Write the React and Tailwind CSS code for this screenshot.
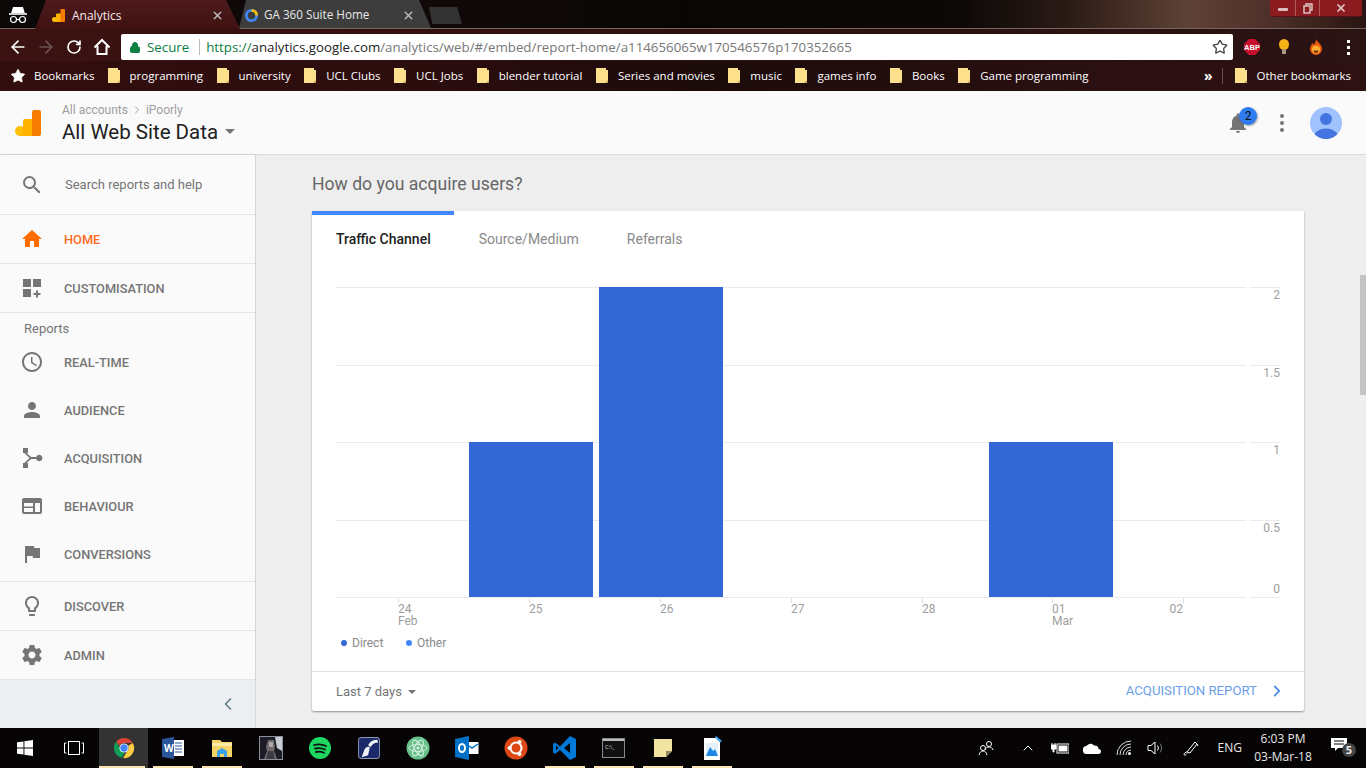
import { ChevronLeft, ChevronRight, ArrowLeft, ArrowRight, RotateCw, Star, Lock, X, ChevronUp } from "lucide-react";

const bookmarks = ["programming", "university", "UCL Clubs", "UCL Jobs", "blender tutorial", "Series and movies", "music", "games info", "Books", "Game programming"];

const paths = {
  search: "M15.5 14h-.79l-.28-.27A6.471 6.471 0 0 0 16 9.5 6.5 6.5 0 1 0 9.5 16c1.61 0 3.09-.59 4.23-1.57l.27.28v.79l5 4.99L20.49 19l-4.99-5zm-6 0C7.01 14 5 11.99 5 9.5S7.01 5 9.5 5 14 7.01 14 9.5 11.99 14 9.5 14z",
  home: "M10 20v-6h4v6h5v-8h3L12 3 2 12h3v8z",
  custom: "M3 3h8v8H3zM13 3h8v8h-8zM3 13h8v8H3zM16 14.500h2v2.500h2.500v2H18v2.500h-2V19h-2.500v-2H16z",
  clock: "M11.99 2C6.47 2 2 6.48 2 12s4.47 10 9.99 10C17.52 22 22 17.52 22 12S17.52 2 11.99 2zM12 20c-4.42 0-8-3.58-8-8s3.58-8 8-8 8 3.58 8 8-3.58 8-8 8zm.5-13H11v6l5.25 3.15.75-1.23-4.5-2.67z",
  person: "M12 12c2.21 0 4-1.79 4-4s-1.79-4-4-4-4 1.79-4 4 1.79 4 4 4zm0 2c-2.67 0-8 1.34-8 4v2h16v-2c0-2.66-5.33-4-8-4z",
  acq: "M3 2h5v5H6.6l4.6 4h5a3.2 3.2 0 1 1 0 2h-5l-4.6 4H8v5H3v-5h1.2l5.4-5-5.4-5H3z",
  behaviour: "M4 4h16a2 2 0 0 1 2 2v12a2 2 0 0 1-2 2H4a2 2 0 0 1-2-2V6a2 2 0 0 1 2-2zm0 5v9h9v-4H4v-1.5h9V9zm11 0v9h5V9z",
  flag: "M14.4 6L14 4H5v17h2v-7h5.6l.4 2h7V6z",
  bulb: "M9 21c0 .55.45 1 1 1h4c.55 0 1-.45 1-1v-1H9v1zm3-19C8.14 2 5 5.14 5 9c0 2.38 1.19 4.47 3 5.74V17c0 .55.45 1 1 1h6c.55 0 1-.45 1-1v-2.26c1.81-1.27 3-3.36 3-5.74 0-3.86-3.14-7-7-7zm2.85 11.1l-.85.6V16h-4v-2.3l-.85-.6C7.8 12.16 7 10.63 7 9c0-2.76 2.24-5 5-5s5 2.24 5 5c0 1.63-.8 3.16-2.15 4.1z",
  gear: "M19.43 12.98c.04-.32.07-.64.07-.98s-.03-.66-.07-.98l2.11-1.65c.19-.15.24-.42.12-.64l-2-3.46c-.12-.22-.39-.3-.61-.22l-2.49 1c-.52-.4-1.08-.73-1.69-.98l-.38-2.65C14.46 2.18 14.25 2 14 2h-4c-.25 0-.46.18-.49.42l-.38 2.65c-.61.25-1.17.59-1.69.98l-2.49-1c-.23-.09-.49 0-.61.22l-2 3.46c-.13.22-.07.49.12.64l2.11 1.65c-.04.32-.07.65-.07.98s.03.66.07.98l-2.11 1.65c-.19.15-.24.42-.12.64l2 3.46c.12.22.39.3.61.22l2.49-1c.52.4 1.08.73 1.69.98l.38 2.65c.03.24.24.42.49.42h4c.25 0 .46-.18.49-.42l.38-2.65c.61-.25 1.17-.59 1.69-.98l2.49 1c.23.09.49 0 .61-.22l2-3.46c.12-.22.07-.49-.12-.64l-2.11-1.65zM12 15.5c-1.93 0-3.5-1.57-3.5-3.5s1.57-3.5 3.5-3.5 3.5 1.57 3.5 3.5-1.57 3.5-3.5 3.5z",
  bell: "M12 22c1.1 0 2-.9 2-2h-4c0 1.1.89 2 2 2zm6-6v-5c0-3.07-1.64-5.64-4.5-6.32V4c0-.83-.67-1.5-1.5-1.5s-1.5.67-1.5 1.5v.68C7.63 5.36 6 7.92 6 11v5l-2 2v1h16v-1l-2-2z",
};

function Mi({ d, className }) {
  return (
    <svg viewBox="0 0 24 24" className={className} fill="currentColor">
      <path d={d} />
    </svg>
  );
}

function GaLogo({ className }) {
  return (
    <svg viewBox="0 0 26 26" className={className}>
      <rect x="0" y="16" width="10" height="10" rx="5" fill="#ffc107" />
      <path d="M8 11a2 2 0 0 1 2-2h8v17H3a3 3 0 0 1-1-.2c3 .2 6-1 6-4z" fill="#ffb300" />
      <path d="M17 2a2 2 0 0 1 2-2h5a2 2 0 0 1 2 2v22a2 2 0 0 1-2 2h-7z" fill="#f57c00" />
    </svg>
  );
}

function Folder() {
  return (
    <svg viewBox="0 0 12 15" className="w-3 h-[15px] shrink-0">
      <path d="M0 0h10v2h2v13H0z" fill="#fce08b" />
      <path d="M9 15l3-3v3z" fill="#c9a94f" />
    </svg>
  );
}

function ChromeLogo() {
  return (
    <svg viewBox="0 0 24 24" className="w-[22px] h-[22px]">
      <path d="M12 1a11 11 0 0 1 9.500 5.500H12A5.500 5.500 0 0 0 7 9.700L3.500 5A11 11 0 0 1 12 1z" fill="#db4437" />
      <path d="M3.500 5L8 12.800a5 5 0 0 0 4.800 4.600L9.500 22.700A11 11 0 0 1 3.500 5z" fill="#0f9d58" />
      <path d="M21.500 6.500A11 11 0 0 1 11 23l4.500-7.500a5 5 0 0 0 1-6z" fill="#ffcd40" />
      <circle cx="12" cy="12" r="5" fill="#fff" />
      <circle cx="12" cy="12" r="4" fill="#4285f4" />
    </svg>
  );
}

function BrowserChrome() {
  return (
    <div className="h-[91px] shrink-0 flex flex-col [font-family:'Open_Sans',sans-serif]">
      {/* Tab strip */}
      <div className="h-[29px] flex items-stretch bg-[linear-gradient(90deg,#0b0808_0%,#120909_30%,#0a0606_50%,#0c0807_70%,#2a1a15_78%,#5e4236_87%,#4d3029_93%,#2a1512_100%)] border-b border-[#75655f]">
        <div className="w-[35px] flex items-center justify-center text-white pt-[2px]">
          <svg viewBox="0 0 20 18" className="w-[20px] h-[18px]" fill="none" stroke="currentColor" strokeWidth="1.200">
            <path d="M5.500 1.500h9l1.500 5H4z" fill="currentColor" />
            <path d="M1 8h18" strokeWidth="1.600" />
            <circle cx="5.500" cy="13.500" r="3" />
            <circle cx="14.500" cy="13.500" r="3" />
            <path d="M8.500 13.500h3" />
          </svg>
        </div>
        <div className="w-[205px] h-[29px] -mb-px bg-[linear-gradient(180deg,#4e1a1a,#3f1212)] [clip-path:polygon(0_100%,11px_0,191px_0,100%_100%)] flex items-center pt-[2px] pl-[17px] pr-[16px]">
          <GaLogo className="w-[13px] h-[13px] shrink-0 mr-[7px]" />
          <span className="text-[12px] text-[#f5e9e9] flex-1">Analytics</span>
          <X className="w-[13px] h-[13px] text-[#bbb]" strokeWidth={2.5} />
        </div>
        <div className="w-[192px] h-[28px] bg-[#3d3d3d] [clip-path:polygon(0_100%,7px_0,180px_0,100%_100%)] flex items-center pt-[2px] pl-[4px] pr-[16px] -ml-px">
          <svg viewBox="0 0 16 16" className="w-[15px] h-[15px] shrink-0 ml-[1px] mr-[5px]" fill="none" strokeWidth="3">
            <circle cx="8" cy="8" r="5.500" stroke="#4285f4" />
            <path d="M8 2.500a5.500 5.500 0 0 1 5.500 5.500" stroke="#fbbc05" />
          </svg>
          <span className="text-[11.7px] text-[#e8e8e8] flex-1">GA 360 Suite Home</span>
          <X className="w-[13px] h-[13px] text-[#bbb]" strokeWidth={2.5} />
        </div>
        <div className="w-[33px] h-[17px] mt-[7px] -ml-[2px] bg-[#333] [clip-path:polygon(0_0,85%_0,100%_100%,10%_100%)]" />
        <div className="flex-1 flex justify-end pr-[4px]">
          <div className="w-[92px] h-[17px] bg-[#8a1b1e] rounded-b-[2px] flex text-[#e3c9c9] border-b border-[#5a1014]">
            <div className="w-[26px] flex items-center justify-center border-r border-[#b05a5a] pt-[3px]"><span className="w-[10px] h-[3px] bg-[#dcbcbc] rounded-[1px]" /></div>
            <div className="w-[24px] flex items-center justify-center border-r border-[#b05a5a]">
              <svg viewBox="0 0 10 11" className="w-[10px] h-[11px]" fill="none" stroke="currentColor" strokeWidth="1.400"><path d="M3 2.500V1h6v6H7.500" /><rect x="1" y="3" width="6" height="7" /></svg>
            </div>
            <div className="flex-1 flex items-center justify-center"><X className="w-3 h-3" strokeWidth={3.5} /></div>
          </div>
        </div>
      </div>

      {/* Toolbar */}
      <div className="h-[32px] flex items-start pt-[5px] bg-[linear-gradient(90deg,#3c1212,#2e0f0f_50%,#2a1313)]">
        <div className="w-[121px] h-[26px] flex items-center text-white pl-[8px]">
          <ArrowLeft className="w-[20px] h-[20px]" strokeWidth={2} />
          <ArrowRight className="w-[20px] h-[20px] ml-[8px] text-[#6e5252]" strokeWidth={2} />
          <RotateCw className="w-[16px] h-[16px] ml-[10px]" strokeWidth={2.5} />
          <svg viewBox="0 0 18 18" className="w-[18px] h-[18px] ml-[11px]" fill="none" stroke="currentColor" strokeWidth="2"><path d="M1.500 9.500L9 2l7.500 7.500M4.500 8v8h9V8" /></svg>
        </div>
        <div className="w-[1112px] h-[26px] bg-white rounded-[2px] flex items-center pl-[8px] pr-[5px] text-[13.3px] whitespace-nowrap">
          <Lock className="w-[12px] h-[13px] text-[#0b8043] mr-[6px]" fill="#0b8043" />
          <span className="text-[#0b8043] mr-[10px] pt-px">Secure</span>
          <span className="w-px h-[16px] bg-[#bbb] mr-[6px]" />
          <span className="flex-1 pt-px">
            <span className="text-[#0b8043]">https://</span>
            <span className="text-[#222]">analytics.google.com</span>
            <span className="text-[#777]">/analytics/web/#/embed/report-home/a114656065w170546576p170352665</span>
          </span>
          <Star className="w-[16px] h-[16px] text-[#444]" strokeWidth={2} />
        </div>
        <div className="flex-1 h-[26px] flex items-center pl-[11px]">
          <svg viewBox="0 0 16 16" className="w-[16px] h-[16px]">
            <polygon points="5,0 11,0 16,5 16,11 11,16 5,16 0,11 0,5" fill="#c8102e" />
            <text x="8" y="11" textAnchor="middle" fontSize="7.500" fontWeight="700" fill="#fff" fontFamily="Liberation Sans, sans-serif">ABP</text>
          </svg>
          <svg viewBox="0 0 12 16" className="w-[12px] h-[16px] ml-[18px]"><ellipse cx="6" cy="5.500" rx="5" ry="5.500" fill="#f5b316" /><rect x="4" y="10" width="4" height="5" fill="#a89a80" /></svg>
          <svg viewBox="0 0 14 16" className="w-[14px] h-[16px] ml-[19px]"><path d="M7 0c1 3 6 5 6 10a6 6 0 0 1-12 0c0-3 2-4 2-6 1 1 2 1 2 2 1-2 2-4 2-6z" fill="#e8590c" /><circle cx="7" cy="10.500" r="4" fill="#fbb034" /><path d="M4.500 11.500a2.500 2.500 0 0 0 5 0z" fill="#7a2d05" /></svg>
          <div className="ml-[24px] flex flex-col gap-[3px]">
            <span className="w-[3px] h-[3px] bg-white" /><span className="w-[3px] h-[3px] bg-white" /><span className="w-[3px] h-[3px] bg-white" />
          </div>
        </div>
      </div>

      {/* Bookmarks bar */}
      <div className="flex-1 flex items-center pb-px pl-[10px] pr-[15px] bg-[linear-gradient(90deg,#330e0e,#2c0d0e_30%,#1c0b0b_52%,#2a1010_80%,#2c1212)] text-[11.5px] text-white whitespace-nowrap">
        <Star className="w-4 h-4 mr-[8px]" fill="#fff" strokeWidth={1} />
        <span className="mr-[13px]">Bookmarks</span>
        <div className="flex items-center gap-[13.5px]">
          {bookmarks.map((b) => (
            <div key={b} className="flex items-center gap-[10px]">
              <Folder />
              <span>{b}</span>
            </div>
          ))}
        </div>
        <div className="flex-1 flex justify-end items-center">
          <span className="font-bold text-[14px] leading-[14px] mr-[9px]">»</span>
          <span className="w-px h-[16px] bg-[#6b4a4a] mr-[12px]" />
          <Folder />
          <span className="ml-[10px]">Other bookmarks</span>
        </div>
      </div>
    </div>
  );
}

function AppHeader() {
  return (
    <div className="h-[64px] shrink-0 bg-[#fafafa] border-b border-[#dcdcdc] flex items-center pl-[15px] pr-[24px] [font-family:Roboto,sans-serif]">
      <GaLogo className="w-[26px] h-[26px] mr-[21px]" />
      <div className="flex-1 pt-[2px]">
        <div className="flex items-center text-[12px] leading-[14px] text-[#9e9e9e]">
          <span>All accounts</span>
          <ChevronRight className="w-3 h-3 mx-[3px]" />
          <span>iPoorly</span>
        </div>
        <div className="flex items-center mt-[2px] text-[20.5px] leading-[26px] text-[#212121]">
          All Web Site Data
          <span className="ml-[7px] w-0 h-0 border-x-[5px] border-x-transparent border-t-[5px] border-t-[#757575]" />
        </div>
      </div>
      <div className="relative mr-[30px]">
        <Mi d={paths.bell} className="w-[24px] h-[24px] text-[#757575]" />
        <span className="absolute -top-[4px] left-[13px] w-[18px] h-[18px] rounded-full bg-[#2f7bf0] text-[#111] text-[12px] flex items-center justify-center shadow-[1px_1px_2px_rgba(0,0,0,0.35)]">2</span>
      </div>
      <div className="flex flex-col gap-[3px] mr-[26px]">
        <span className="w-[4px] h-[4px] rounded-full bg-[#757575]" /><span className="w-[4px] h-[4px] rounded-full bg-[#757575]" /><span className="w-[4px] h-[4px] rounded-full bg-[#757575]" />
      </div>
      <svg viewBox="0 0 32 32" className="w-[32px] h-[32px]">
        <clipPath id="av"><circle cx="16" cy="16" r="16" /></clipPath>
        <g clipPath="url(#av)">
          <rect width="32" height="32" fill="#a0c3ff" />
          <circle cx="16" cy="12" r="6" fill="#4374e0" />
          <ellipse cx="16" cy="30" rx="12" ry="8.500" fill="#4374e0" />
        </g>
      </svg>
    </div>
  );
}

function NavRow({ icon, label, active, className = "" }) {
  return (
    <div className={`flex items-center pl-[20px] ${className}`}>
      <Mi d={icon} className={`w-[24px] h-[24px] mr-[20px] ${active ? "text-[#ff6d00]" : "text-[#757575]"}`} />
      <span className={`text-[12.8px] font-medium pt-[2px] ${active ? "text-[#ff6d1f]" : "text-[#757575]"}`}>{label}</span>
    </div>
  );
}

function Sidebar() {
  return (
    <div className="w-[256px] shrink-0 bg-[#fafafa] border-r border-[#d6d6d6] shadow-[1px_0_2px_rgba(0,0,0,0.15)] flex flex-col [font-family:Roboto,sans-serif]">
      <div className="h-[60px] flex items-center pl-[20px] border-b border-[#e4e4e4]">
        <Mi d={paths.search} className="w-[24px] h-[24px] mr-[21px] text-[#757575]" />
        <span className="text-[13px] text-[#757575]">Search reports and help</span>
      </div>
      <NavRow icon={paths.home} label="HOME" active className="h-[49px] border-b border-[#e4e4e4]" />
      <NavRow icon={paths.custom} label="CUSTOMISATION" className="h-[49px] border-b border-[#e4e4e4]" />
      <div className="h-[25px] pl-[24px] pt-[7px] flex items-center text-[13px] text-[#757575]">Reports</div>
      <NavRow icon={paths.clock} label="REAL-TIME" className="h-[48px]" />
      <NavRow icon={paths.person} label="AUDIENCE" className="h-[48px]" />
      <NavRow icon={paths.acq} label="ACQUISITION" className="h-[48px]" />
      <NavRow icon={paths.behaviour} label="BEHAVIOUR" className="h-[48px]" />
      <NavRow icon={paths.flag} label="CONVERSIONS" className="h-[52px] pb-[4px] border-b border-[#e4e4e4]" />
      <NavRow icon={paths.bulb} label="DISCOVER" className="h-[49px] border-b border-[#e4e4e4]" />
      <NavRow icon={paths.gear} label="ADMIN" className="h-[49px] border-b border-[#e4e4e4]" />
      <div className="flex-1 bg-[#eceff1] flex items-center justify-end pr-[17px]">
        <ChevronLeft className="w-[20px] h-[20px] text-[#607d8b]" />
      </div>
    </div>
  );
}

const xTicks = [
  { x: 398, label: "24", sub: "Feb" },
  { x: 529, label: "25" },
  { x: 660, label: "26" },
  { x: 791, label: "27" },
  { x: 922, label: "28" },
  { x: 1052, label: "01", sub: "Mar" },
  { x: 1183, label: "02", end: true },
];
const yTicks = [
  { y: 287, label: "2", ty: 299 },
  { y: 365, label: "1.5", ty: 377 },
  { y: 442, label: "1", ty: 454 },
  { y: 520, label: "0.5", ty: 532 },
  { y: 597, label: "0", ty: 593 },
];
const bars = [
  { x: 469, y: 442 },
  { x: 599, y: 287 },
  { x: 989, y: 442 },
];

function Chart() {
  // svg origin is at page (312, 263)
  return (
    <svg viewBox="312 263 992 408" className="w-[992px] h-[408px] block [font-family:Roboto,sans-serif]">
      {yTicks.map((t) => (
        <g key={t.label}>
          <rect x="336" y={t.y} width="910" height="1" fill="#ebebeb" />
          <rect x="1250" y={t.y} width="30" height="1" fill="#ebebeb" />
          <text x="1280" y={t.ty} textAnchor="end" fontSize="12" fill="#9e9e9e">{t.label}</text>
        </g>
      ))}
      {bars.map((b) => (
        <rect key={b.x} x={b.x} y={b.y} width="124" height={597 - b.y} fill="#3367d6" />
      ))}
      {xTicks.map((t) => (
        <g key={t.x}>
          <rect x={t.x} y="598" width="1" height="5" fill="#e0e0e0" />
          <text x={t.x} y="613" textAnchor={t.end ? "end" : "start"} fontSize="12" fill="#9e9e9e">{t.label}</text>
          {t.sub && <text x={t.x} y="625" fontSize="12" fill="#9e9e9e">{t.sub}</text>}
        </g>
      ))}
      <circle cx="344" cy="643" r="3" fill="#3367d6" />
      <text x="352" y="647" fontSize="12" fill="#8a8a8a">Direct</text>
      <circle cx="409" cy="643" r="3" fill="#4285f4" />
      <text x="417" y="647" fontSize="12" fill="#8a8a8a">Other</text>
    </svg>
  );
}

function Card() {
  return (
    <div className="w-[992px] bg-white rounded-b-[2px] shadow-[0_1px_2px_rgba(0,0,0,0.4)]">
      <div className="w-[142px] h-[4px] bg-[#4285f4]" />
      <div className="h-[48px] flex items-center pl-[24px] text-[14px] text-[#8a8a8a]">
        <span className="font-medium text-[#212121] mr-[48px]">Traffic Channel</span>
        <span className="mr-[48px]">Source/Medium</span>
        <span>Referrals</span>
      </div>
      <Chart />
      <div className="h-[40px] border-t border-[#e0e0e0] flex items-center pl-[24px] pr-[18px] text-[13px]">
        <span className="text-[#757575]">Last 7 days</span>
        <span className="ml-[6px] mt-[1px] w-0 h-0 border-x-[4px] border-x-transparent border-t-[4px] border-t-[#757575]" />
        <span className="ml-auto text-[13.2px] pb-[2px] text-[#6a9fe8]">ACQUISITION REPORT</span>
        <ChevronRight className="w-[18px] h-[18px] ml-[11px] mb-[2px] text-[#5a96e6]" strokeWidth={2.5} />
      </div>
    </div>
  );
}

function Content() {
  return (
    <div className="flex-1 bg-[#eeeeee] pl-[56px] [font-family:Roboto,sans-serif] overflow-hidden">
      <div className="h-[56px] flex items-center pt-[2px] text-[17.6px] text-[#666]">How do you acquire users?</div>
      <Card />
    </div>
  );
}

function Scrollbar() {
  return (
    <div className="w-[8px] shrink-0 bg-[#eeeeee] pt-[120px]">
      <div className="h-[120px] bg-[#c4c4c4] ml-[2px]" />
    </div>
  );
}

function Slot({ children, active, running }) {
  return (
    <div className={`w-[49px] h-full flex items-center justify-center relative ${active ? "bg-[#333]" : ""}`}>
      {children}
      {running && <span className={`absolute bottom-0 h-[2px] bg-[#fbe3b3] ${active ? "left-0 right-[3px]" : "left-[5px] right-[4px]"}`} />}
    </div>
  );
}

function Taskbar() {
  return (
    <div className="h-[40px] shrink-0 bg-[#060404] flex items-stretch text-white [font-family:'Open_Sans',sans-serif]">
      <div className="w-[49px] flex items-center justify-center">
        <svg viewBox="0 0 16 16" className="w-[16px] h-[16px]" fill="#fff"><path d="M0 2.300L6.500 1.400V7.600H0zM7.400 1.300L16 0V7.600H7.400zM0 8.400H6.500V14.600L0 13.700zM7.400 8.400H16V16L7.400 14.700z" /></svg>
      </div>
      <div className="w-[50px] flex items-center justify-center">
        <svg viewBox="0 0 20 14" className="w-[20px] h-[14px]" fill="none" stroke="#fff" strokeWidth="1"><rect x="4.500" y="0.500" width="11" height="13" /><path d="M2.500 2H0.500v10h2M17.500 2h2v10h-2" /></svg>
      </div>
      <Slot active running><ChromeLogo /></Slot>
      <Slot running>
        <svg viewBox="0 0 24 24" className="w-[24px] h-[24px]"><rect x="8" y="4" width="15" height="16" fill="#fff" /><path d="M14 7h7M14 10h7M14 13h7M14 16h7" stroke="#2b579a" /><path d="M1 3l12-2v22L1 21z" fill="#2b579a" /><text x="3" y="16" fontSize="10" fontWeight="700" fill="#fff">W</text></svg>
      </Slot>
      <Slot running>
        <svg viewBox="0 0 22 22" className="w-[22px] h-[22px]"><path d="M1 3h8l2 2h10v15H1z" fill="#f6d365" /><rect x="1" y="6" width="20" height="3" fill="#fbe9a8" /><path d="M6 20v-6l5-3 5 3v6h-3v-3H9v3z" fill="#3aa0e8" /></svg>
      </Slot>
      <Slot>
        <svg viewBox="0 0 24 24" className="w-[24px] h-[24px]"><rect width="24" height="24" fill="#8a8f9c" /><rect x="1" y="1" width="22" height="22" fill="#1c1c24" /><path d="M16 1h7v14l-5-3z" fill="#c9ccd2" /><path d="M9 4h6l1 7-1 4 3 8H5l3-8-1-4z" fill="#6f6a6e" /><path d="M10 6h4v5h-4z" fill="#b0a8a4" /><path d="M9 15h5l2 8H7z" fill="#3e3a44" /></svg>
      </Slot>
      <Slot>
        <svg viewBox="0 0 24 24" className="w-[24px] h-[24px]"><circle cx="12" cy="12" r="11" fill="#1ed760" /><path d="M6 9c4-1 8-1 12 1M7 12.500c3.500-.8 7-.5 10 1M8 16c3-.6 5.500-.3 8 .8" stroke="#111" strokeWidth="1.800" fill="none" strokeLinecap="round" /></svg>
      </Slot>
      <Slot>
        <svg viewBox="0 0 24 24" className="w-[22px] h-[24px]"><rect width="24" height="24" rx="4" fill="#8f96b0" /><rect x="1" y="1" width="22" height="22" rx="3" fill="#1a2a6a" /><path d="M4 22l3-8c1-3 4-4 6-3l-2 9z" fill="#f2f3f8" /><path d="M11 9c2-4 6-6 10-6l1 3c-4 0-7 2-8 5z" fill="#f2f3f8" /></svg>
      </Slot>
      <Slot>
        <svg viewBox="0 0 24 24" className="w-[24px] h-[24px]"><circle cx="12" cy="12" r="11.500" fill="#66c08a" /><g fill="none" stroke="#d8f0e0" strokeWidth="1"><ellipse cx="12" cy="12" rx="9" ry="3.500" /><ellipse cx="12" cy="12" rx="9" ry="3.500" transform="rotate(60 12 12)" /><ellipse cx="12" cy="12" rx="9" ry="3.500" transform="rotate(120 12 12)" /></g><circle cx="12" cy="12" r="1.600" fill="#d8f0e0" /></svg>
      </Slot>
      <Slot>
        <svg viewBox="0 0 24 24" className="w-[24px] h-[24px]"><rect x="10" y="6" width="13.500" height="12" fill="#fff" /><path d="M11 8l6 4 6-4" stroke="#0072c6" strokeWidth="1.500" fill="none" /><path d="M0 3l14-3v24L0 21z" fill="#0072c6" /><ellipse cx="7" cy="12" rx="3" ry="4" fill="none" stroke="#fff" strokeWidth="2" /></svg>
      </Slot>
      <Slot>
        <svg viewBox="0 0 24 24" className="w-[24px] h-[24px]"><circle cx="12" cy="12" r="11.500" fill="#dd4814" /><circle cx="12" cy="12" r="5.500" fill="none" stroke="#fff" strokeWidth="2" /><circle cx="5.500" cy="12" r="2" fill="#fff" /><circle cx="15.500" cy="6" r="2" fill="#fff" /><circle cx="15.500" cy="18" r="2" fill="#fff" /></svg>
      </Slot>
      <Slot running>
        <svg viewBox="0 0 24 24" className="w-[24px] h-[24px]"><path d="M17 0l6 3v18l-6 3L7 14 2 18l-2-1.500V8l2-1.500 5 4z" fill="#0078d7" /><path d="M17 7l-6 5 6 5z" fill="#060404" /><path d="M3 9.500v5l2.500-2.500z" fill="#060404" /></svg>
      </Slot>
      <Slot running>
        <div className="w-[23px] h-[20px] bg-[#111] border border-[#8a8a8a] flex flex-col">
          <span className="h-[2px] bg-[#bbb]" />
          <span className="text-[5.5px] leading-[8px] text-[#ddd] pl-[2px] pt-[2px]">C:\_</span>
        </div>
      </Slot>
      <Slot running>
        <svg viewBox="0 0 18 18" className="w-[18px] h-[18px]"><path d="M0 0h18v12l-6 6H0z" fill="#f0e4a0" /><path d="M12 18l6-6h-6z" fill="#8f8a6a" /></svg>
      </Slot>
      <Slot running>
        <svg viewBox="0 0 20 24" className="w-[20px] h-[24px]"><path d="M2 2h12l4 4v18H2z" fill="#fff" /><path d="M4 7h12v13H4z" fill="#e3f2fd" /><path d="M4 20l4-9 3 4 2-2 3 7z" fill="#1e88e5" /><path d="M14 0l6 5-2 1.500-5-5z" fill="#42a5f5" /></svg>
      </Slot>

      {/* Tray */}
      <div className="flex-1 flex items-center justify-end text-[12px] text-[#e8e8e8] pr-[17px]">
        <svg viewBox="0 0 16 16" className="w-[16px] h-[16px]" fill="none" stroke="#fff"><circle cx="11" cy="4" r="2.500" /><path d="M7 10c.5-2 2-3 4-3s3.500 1 4 3" /><circle cx="5" cy="8" r="2.500" /><path d="M1 15c.4-2.500 2-4 4-4s3.600 1.500 4 4" /></svg>
        <ChevronUp className="w-[16px] h-[16px] ml-[26px] text-white" strokeWidth={1.5} />
        <svg viewBox="0 0 18 12" className="w-[18px] h-[12px] ml-[15px]" fill="#fff"><rect x="6" y="2" width="12" height="9" fill="none" stroke="#fff" /><rect x="7.500" y="3.500" width="9" height="6" /><path d="M0 3h5v4H3v3H2V7H0zM1 1v2M4 1v2" stroke="#fff" /></svg>
        <svg viewBox="0 0 18 11" className="w-[18px] h-[11px] ml-[14px]" fill="#fff"><path d="M4 11a4 4 0 0 1-.5-8C5 .5 9-.5 11 2.500c3-.5 5 2 4.500 3.500 1.500 0 2.500 1 2.500 2.500S17 11 15.500 11z" /></svg>
        <svg viewBox="0 0 16 16" className="w-[16px] h-[16px] ml-[15px]" fill="none" stroke="#ddd"><path d="M1 15A14 14 0 0 1 15 1M4 15A11 11 0 0 1 15 4M7 15a8 8 0 0 1 8-8M10 15a5 5 0 0 1 5-5" /><circle cx="13.500" cy="13.500" r="1.500" fill="#fff" stroke="none" /></svg>
        <svg viewBox="0 0 18 16" className="w-[18px] h-[16px] ml-[15px]" fill="none" stroke="#fff"><path d="M1 5.500h3L8 2v12l-4-3.500H1z" /><path d="M10.500 5.500a4 4 0 0 1 0 5" /><path d="M13 3.500a7 7 0 0 1 0 9" stroke="#777" /></svg>
        <svg viewBox="0 0 16 16" className="w-[16px] h-[16px] ml-[18px]" fill="none" stroke="#fff"><path d="M4 12L12 2l2 2-7 9zM4 12c-1 0-3 1-3 2.500 0 1 2 .5 3-1" /><path d="M14 4l1 2" /></svg>
        <span className="ml-[19px] text-[12px]">ENG</span>
        <div className="ml-[9px] w-[64px] flex flex-col items-center leading-[18px]">
          <span>6:03 PM</span>
          <span>03-Mar-18</span>
        </div>
        <div className="relative ml-[16px] w-[18px] h-[16px] mt-[-4px]">
          <svg viewBox="0 0 16 14" className="w-[16px] h-[14px]" fill="#fff"><path d="M0 0h16v10H7l-3 3v-3H0z" /><path d="M3 3h10M3 6h10" stroke="#060404" /></svg>
          <span className="absolute -right-[7px] top-[5px] w-[14px] h-[14px] rounded-full bg-[#444] text-[11px] font-bold flex items-center justify-center">5</span>
        </div>
      </div>
    </div>
  );
}

export default function App() {
  return (
    <div className="w-[1366px] h-[768px] flex flex-col overflow-hidden">
      <BrowserChrome />
      <AppHeader />
      <div className="flex-1 min-h-0 flex">
        <Sidebar />
        <Content />
        <Scrollbar />
      </div>
      <Taskbar />
    </div>
  );
}
